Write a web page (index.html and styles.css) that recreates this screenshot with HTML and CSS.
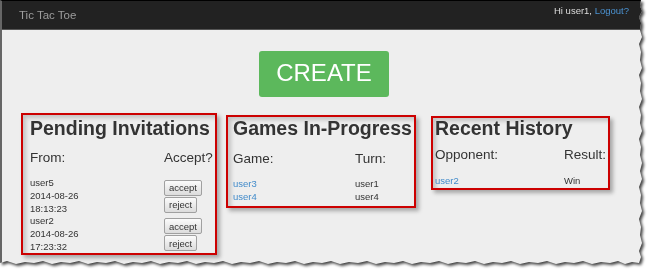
FILE: index.html
```html
<!DOCTYPE html>
<html>
<head>
<meta charset="UTF-8">
<meta name="viewport" content="width=device-width, initial-scale=1.0">
<title>Tic Tac Toe</title>
<link rel="stylesheet" href="styles.css">
</head>

<body>
<div class="shot">
<div class="frame">
    <div class="navbar">
        <span class="brand">Tic Tac Toe</span>
        <span class="user">Hi user1, <a href="#">Logout?</a></span>
    </div>

    <div class="actions">
        <button class="create" type="button">CREATE</button>
    </div>

    <div class="cols">
        <div class="box box-pending">
            <h2 class="title">Pending Invitations</h2>
            <div class="list list-pending">
                <div class="head">From:</div>
                <div class="head">Accept?</div>

                <div class="cell">user5<br>2014-08-26<br>18:13:23</div>
                <div class="cell btns">
                    <button class="btn" type="button">accept</button>
                    <button class="btn" type="button">reject</button>
                </div>

                <div class="cell">user2<br>2014-08-26<br>17:23:32</div>
                <div class="cell btns">
                    <button class="btn" type="button">accept</button>
                    <button class="btn" type="button">reject</button>
                </div>
            </div>
        </div>

        <div class="box box-games">
            <h2 class="title">Games In-Progress</h2>
            <div class="list list-games">
                <div class="head">Game:</div>
                <div class="head">Turn:</div>
                <div class="cell"><a href="#">user3</a></div>
                <div class="cell">user1</div>
                <div class="cell"><a href="#">user4</a></div>
                <div class="cell">user4</div>
            </div>
        </div>

        <div class="box box-history">
            <h2 class="title">Recent History</h2>
            <div class="list list-history">
                <div class="head">Opponent:</div>
                <div class="head">Result:</div>
                <div class="cell"><a href="#">user2</a></div>
                <div class="cell">Win</div>
            </div>
        </div>
    </div>
</div>
</div>
</body>
</html>
```

FILE: styles.css
```css
body { margin: 0; background: #fff; font-family: "Liberation Sans", Arial, sans-serif; color: #333; }
a { color: #428bca; text-decoration: none; }

/* screenshot frame with torn right and bottom edge */
.shot { width: 648px; height: 270px; filter: drop-shadow(2px 2px 1.5px rgba(0,0,0,.75)); }
.frame {
    width: 648px; height: 268px; box-sizing: border-box;
    background: #eee; border-left: 2px solid #666; border-top: 1px solid #000;
    clip-path: polygon(0 0, 641px 0, 640px 6px, 642px 11px, 639px 17px, 641px 23px, 640px 30px, 642px 37px, 639px 44px,
        641px 52px, 640px 60px, 642px 68px, 639px 75px, 641px 83px, 640px 91px, 642px 99px, 639px 107px,
        641px 115px, 640px 123px, 642px 131px, 639px 139px, 641px 147px, 640px 155px, 642px 163px, 640px 171px,
        642px 179px, 639px 187px, 641px 195px, 640px 203px, 642px 211px, 639px 219px, 641px 227px, 640px 235px,
        642px 243px, 639px 251px, 641px 257px, 639px 263px,
        632px 262px, 625px 264px, 618px 261px, 610px 263px, 601px 262px, 592px 264px, 583px 261px, 574px 263px,
        565px 262px, 556px 264px, 547px 261px, 538px 263px, 529px 262px, 520px 264px, 511px 261px, 502px 263px,
        493px 262px, 484px 264px, 475px 261px, 466px 263px, 457px 262px, 448px 264px, 439px 261px, 430px 263px,
        421px 262px, 412px 264px, 403px 261px, 394px 263px, 385px 262px, 376px 264px, 367px 261px, 358px 263px,
        349px 262px, 340px 264px, 331px 261px, 322px 263px, 313px 262px, 304px 264px, 295px 261px, 286px 263px,
        277px 262px, 268px 264px, 259px 261px, 250px 263px, 241px 262px, 232px 264px, 223px 261px, 214px 263px,
        205px 262px, 196px 264px, 187px 261px, 178px 263px, 169px 262px, 160px 264px, 151px 261px, 142px 263px,
        133px 262px, 124px 264px, 115px 261px, 106px 263px, 97px 262px, 88px 264px, 79px 261px, 70px 263px,
        61px 262px, 52px 264px, 43px 261px, 34px 263px, 25px 262px, 16px 264px, 7px 261px, 0 263px);
}

.navbar { height: 28px; background: #222; border-bottom: 1px solid #555; display: flex; justify-content: space-between; align-items: flex-start; padding: 0 19px 0 17px; }
.navbar .brand { font-size: 11.5px; line-height: 14px; margin-top: 7px; color: #9d9d9d; }
.navbar .user { font-size: 9.5px; line-height: 12px; margin-top: 4px; color: #ddd; }
.navbar .user a { color: #4b93d3; }

.actions { display: flex; justify-content: center; padding: 21px 2px 16px 0; }
.create { width: 130px; height: 46px; border: 0; border-radius: 3px; background: #5cb85c; color: #fff;
    font-family: "Liberation Sans", Arial, sans-serif; font-size: 24px; padding: 0 0 2px; }

.cols { display: flex; align-items: flex-start; padding-left: 19px; }
.box { box-sizing: border-box; border: 2px solid #c00;
    box-shadow: 3px 3px 4px rgba(0,0,0,.3), inset 3px 3px 4px rgba(0,0,0,.18); }
.box-pending { width: 196px; height: 142px; padding: 3px 3px 0 7px; }
.box-games { width: 190px; height: 93px; padding: 1px 3px 0 5px; margin: 2px 0 0 9px; }
.box-history { width: 179px; height: 74px; padding: 0 3px 0 2px; margin: 3px 0 0 15px; }

.title { margin: 0; font-size: 19.5px; line-height: 21px; font-weight: bold; white-space: nowrap; }

.list { display: grid; margin-top: 11px; font-size: 9.5px; line-height: 12.8px; }
.list-pending { grid-template-columns: 134px auto; }
.list-games { grid-template-columns: 122px auto; margin-top: 12px; line-height: 13px; }
.list-history { grid-template-columns: 129px auto; margin-top: 8px; }
.list .head { font-size: 13.5px; line-height: 16px; padding-bottom: 11px; white-space: nowrap; }
.list-games .head { padding-bottom: 10px; }
.list-history .head { padding-bottom: 12px; }

.btns { display: flex; flex-direction: column; align-items: flex-start; justify-content: center; gap: 1px; }
.btn { height: 16px; padding: 0 4px; border: 1px solid #a0a0a0; border-radius: 2px;
    background: linear-gradient(#fbfbfb, #dcdcdc); color: #333;
    font-family: "Liberation Sans", Arial, sans-serif; font-size: 9.5px; line-height: 13px; }
```
